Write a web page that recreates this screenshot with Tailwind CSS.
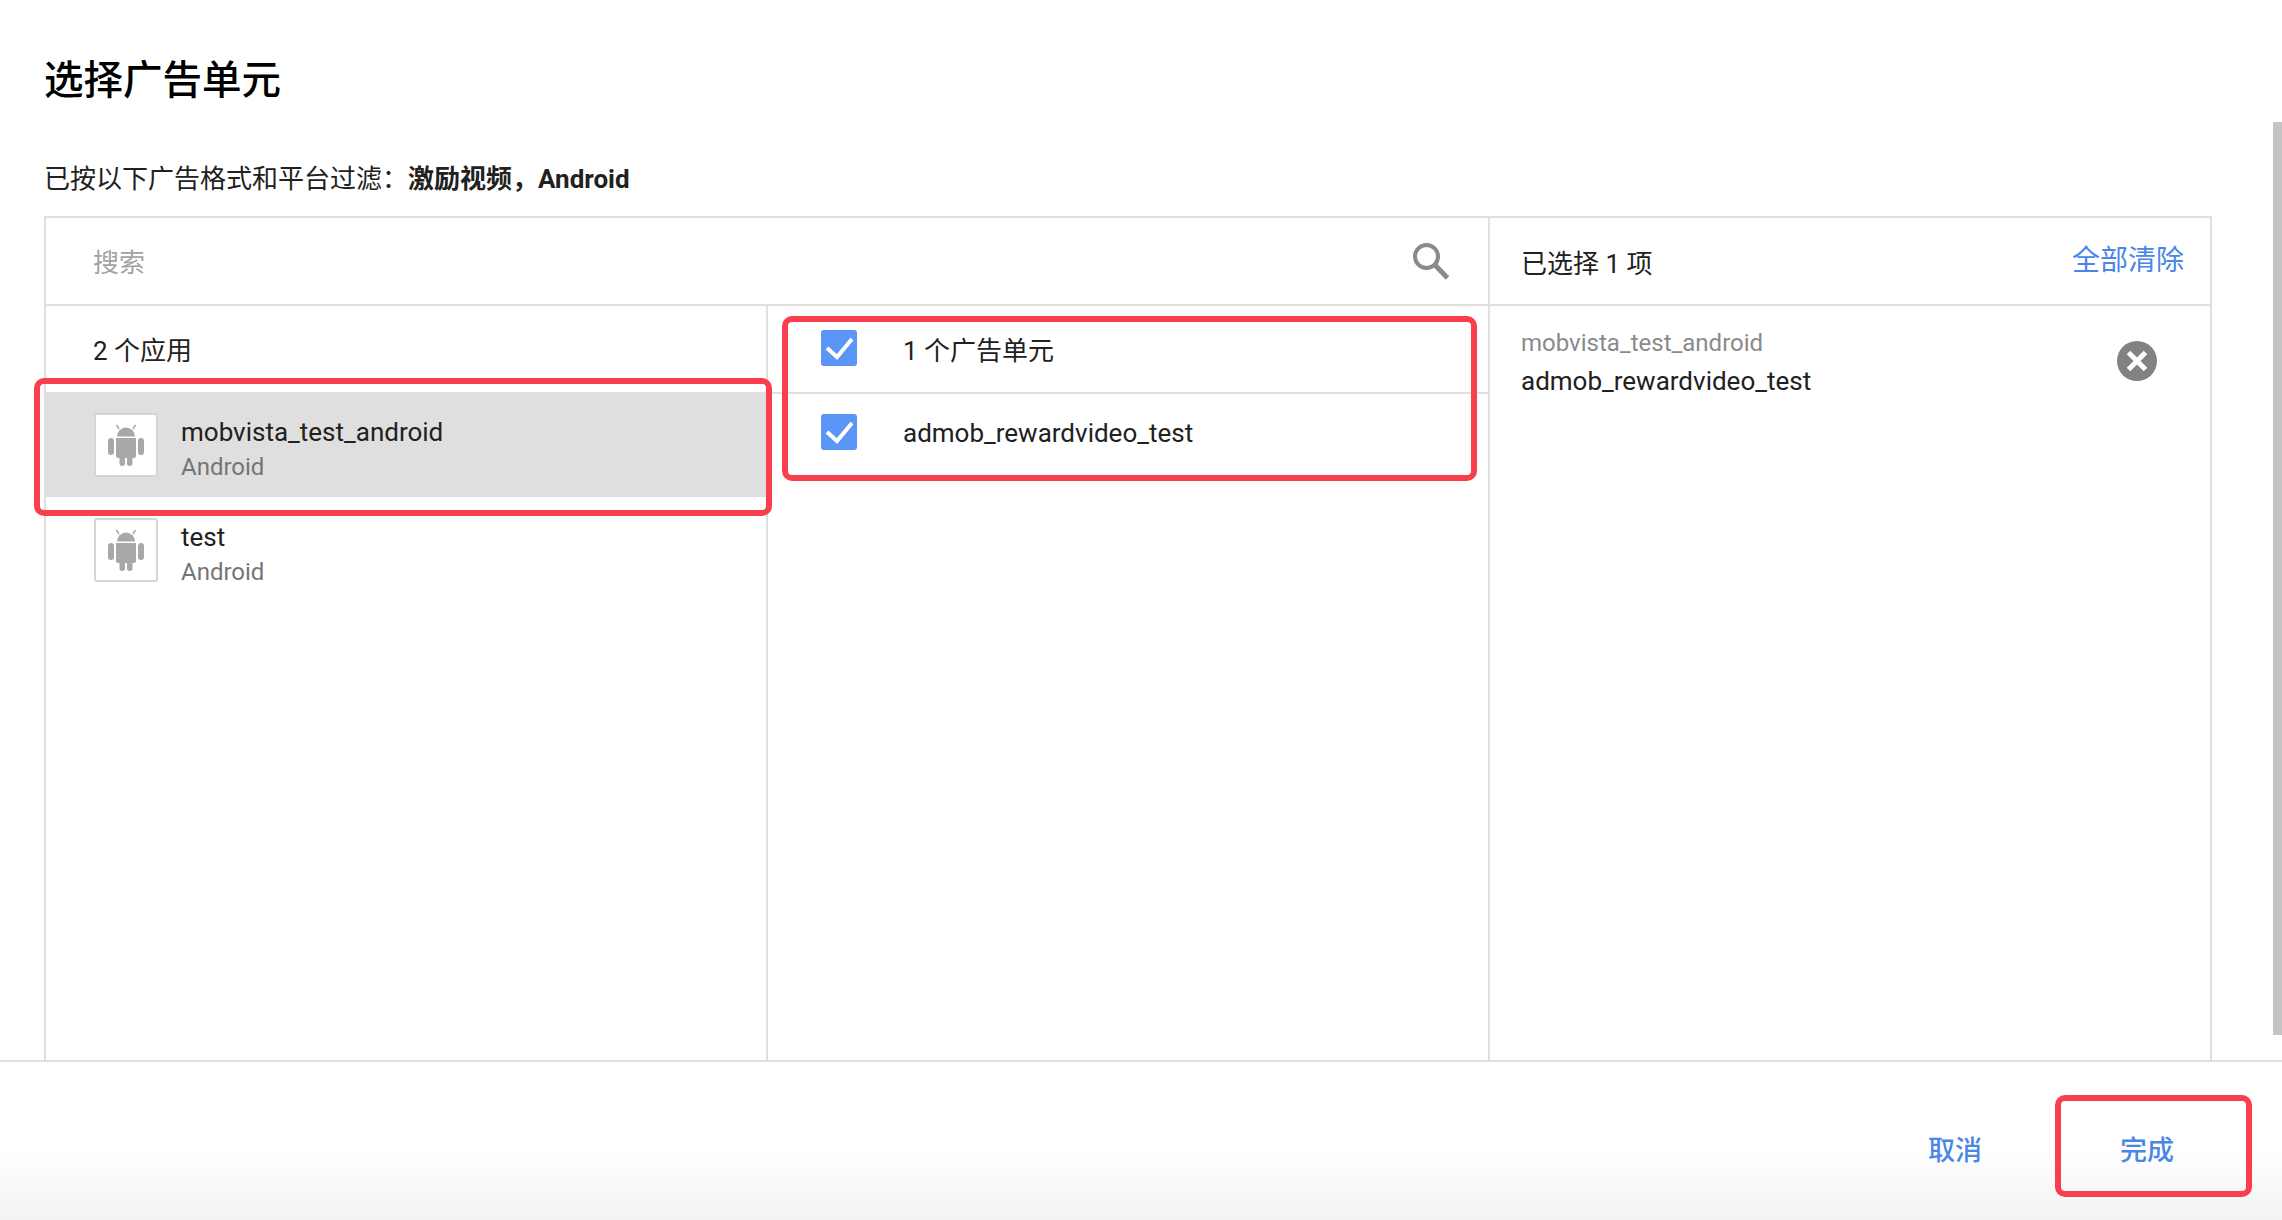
<!DOCTYPE html>
<html lang="zh-CN">
<head>
  <meta charset="UTF-8" />
  <title>选择广告单元</title>
  <script src="https://cdn.jsdelivr.net/npm/@tailwindcss/browser@4"></script>
</head>
<body class="bg-white font-['Roboto','Noto_Sans_CJK_SC',sans-serif] text-[#212121]">
  <div class="relative w-[2282px] h-[1220px] overflow-hidden flex flex-col">

    <!-- heading -->
    <div class="h-[216px] pl-[44px] shrink-0">
      <h1 class="pt-[51px] h-[160px] text-[39.5px] leading-[60px] font-medium text-black">选择广告单元</h1>
      <p class="text-[26px] leading-[38px]">已按以下广告格式和平台过滤：<b class="font-bold">激励视频，Android</b></p>
    </div>

    <!-- picker -->
    <div class="ml-[44px] w-[2168px] h-[844px] shrink-0 border-2 border-b-0 border-[#e0e0e0] grid grid-cols-[1444px_1fr]">
      <div class="flex flex-col border-r-2 border-[#e0e0e0]">
        <div class="h-[88px] shrink-0 border-b-2 border-[#e0e0e0] flex items-center justify-between pl-[47px] pr-[38px]">
          <span class="text-[26px] mt-[5px] text-[#a3a3a3]">搜索</span>
          <svg class="w-[38px] h-[38px]" viewBox="0 0 38 38" fill="none" stroke="#8a8a8a" stroke-width="4">
            <circle cx="14.5" cy="14.5" r="11.5" />
            <path d="M23 23l12.5 13" stroke-width="5" />
          </svg>
        </div>
        <div class="flex-1 grid grid-cols-[722px_1fr]">
          <!-- apps -->
          <div class="border-r-2 border-[#e0e0e0]">
            <div class="h-[86px] pl-[47px] pt-[5px] flex items-center text-[26px]">2 个应用</div>
            <div class="h-[105px] mr-[-2px] bg-[#dfdfdf] pl-[48px] flex items-center gap-[23px]">
              <div class="w-[64px] h-[64px] bg-white border-2 border-[#d5d5d5] rounded-[3px] flex items-center justify-center">
                <svg class="w-[36px] h-[42px]" viewBox="0 0 36 42" fill="#a8a8a8">
                  <path d="M9 12.5a9 9 0 0 1 18 0z" />
                  <path d="M11 5L8.5 1M25 5l2.5-4" stroke="#a8a8a8" stroke-width="1.5" />
                  <rect x="0" y="14" width="6" height="17" rx="3" />
                  <rect x="30" y="14" width="6" height="17" rx="3" />
                  <path d="M8 14h20v18a2 2 0 0 1-2 2H10a2 2 0 0 1-2-2z" />
                  <rect x="11.5" y="32" width="5.5" height="10" rx="2.7" />
                  <rect x="19" y="32" width="5.5" height="10" rx="2.7" />
                </svg>
              </div>
              <div class="pt-[11px]">
                <div class="text-[26px] leading-[35px]">mobvista_test_android</div>
                <div class="text-[24px] leading-[35px] text-[#757575]">Android</div>
              </div>
            </div>
            <div class="h-[105px] pl-[48px] flex items-center gap-[23px]">
              <div class="w-[64px] h-[64px] bg-white border-2 border-[#d5d5d5] rounded-[3px] flex items-center justify-center">
                <svg class="w-[36px] h-[42px]" viewBox="0 0 36 42" fill="#a8a8a8">
                  <path d="M9 12.5a9 9 0 0 1 18 0z" />
                  <path d="M11 5L8.5 1M25 5l2.5-4" stroke="#a8a8a8" stroke-width="1.5" />
                  <rect x="0" y="14" width="6" height="17" rx="3" />
                  <rect x="30" y="14" width="6" height="17" rx="3" />
                  <path d="M8 14h20v18a2 2 0 0 1-2 2H10a2 2 0 0 1-2-2z" />
                  <rect x="11.5" y="32" width="5.5" height="10" rx="2.7" />
                  <rect x="19" y="32" width="5.5" height="10" rx="2.7" />
                </svg>
              </div>
              <div class="pt-[10px]">
                <div class="text-[26px] leading-[35px]">test</div>
                <div class="text-[24px] leading-[35px] text-[#757575]">Android</div>
              </div>
            </div>
          </div>
          <!-- ad units -->
          <div>
            <div class="h-[88px] border-b-2 border-[#e0e0e0] pl-[53px] flex items-start">
              <div class="mt-[24px] w-[36px] h-[36px] bg-[#5b95f5] rounded-[3px] flex items-center justify-center">
                <svg class="w-[36px] h-[36px]" viewBox="0 0 36 36" fill="none" stroke="#fff" stroke-width="4"><path d="M6 18l10 9L31 9" /></svg>
              </div>
              <span class="ml-[46px] mt-[28px] text-[26px] leading-[34px]">1 个广告单元</span>
            </div>
            <div class="h-[84px] pl-[53px] flex items-start">
              <div class="mt-[20px] w-[36px] h-[36px] bg-[#5b95f5] rounded-[3px] flex items-center justify-center">
                <svg class="w-[36px] h-[36px]" viewBox="0 0 36 36" fill="none" stroke="#fff" stroke-width="4"><path d="M6 18l10 9L31 9" /></svg>
              </div>
              <span class="ml-[46px] mt-[22px] text-[26px] leading-[34px]">admob_rewardvideo_test</span>
            </div>
          </div>
        </div>
      </div>

      <!-- selected -->
      <div class="flex flex-col">
        <div class="h-[88px] shrink-0 border-b-2 border-[#e0e0e0] flex items-center justify-between pl-[31px] pr-[26px]">
          <span class="text-[26px] leading-[34px] mt-[5px]">已选择 1 项</span>
          <button class="text-[28px] leading-[34px] text-[#4a86e8]">全部清除</button>
        </div>
        <div class="flex items-start justify-between pl-[31px] pr-[53px] pt-[20px]">
          <div>
            <div class="text-[24px] leading-[34px] text-[#8a8a8a]">mobvista_test_android</div>
            <div class="text-[26px] leading-[40px] mt-[1px]">admob_rewardvideo_test</div>
          </div>
          <svg class="w-[40px] h-[40px] mt-[15px]" viewBox="0 0 40 40">
            <circle cx="20" cy="20" r="20" fill="#828282" />
            <path d="M11.5 11.5l17 17M28.5 11.5l-17 17" stroke="#fff" stroke-width="5" />
          </svg>
        </div>
      </div>
    </div>

    <!-- footer -->
    <div class="flex-1 border-t-2 border-[#e0e0e0] bg-gradient-to-b from-white from-[55%] to-[#f3f3f3] flex justify-end items-center gap-[138px] pr-[108px] pt-[20px]">
      <button class="text-[27px] font-medium text-[#4a86e8]">取消</button>
      <button class="text-[27px] font-medium text-[#4a86e8]">完成</button>
    </div>

    <!-- annotation boxes -->
    <div class="absolute left-[34px] top-[378px] w-[738px] h-[138px] border-[6px] border-[#f93e4e] rounded-[10px]"></div>
    <div class="absolute left-[782px] top-[316px] w-[695px] h-[165px] border-[6px] border-[#f93e4e] rounded-[10px]"></div>
    <div class="absolute left-[2055px] top-[1095px] w-[197px] h-[102px] border-[6px] border-[#f93e4e] rounded-[10px]"></div>

    <!-- page scrollbar -->
    <div class="absolute left-[2273px] top-[122px] w-[9px] h-[913px] bg-[#c4c4c4]"></div>
  </div>
</body>
</html>
